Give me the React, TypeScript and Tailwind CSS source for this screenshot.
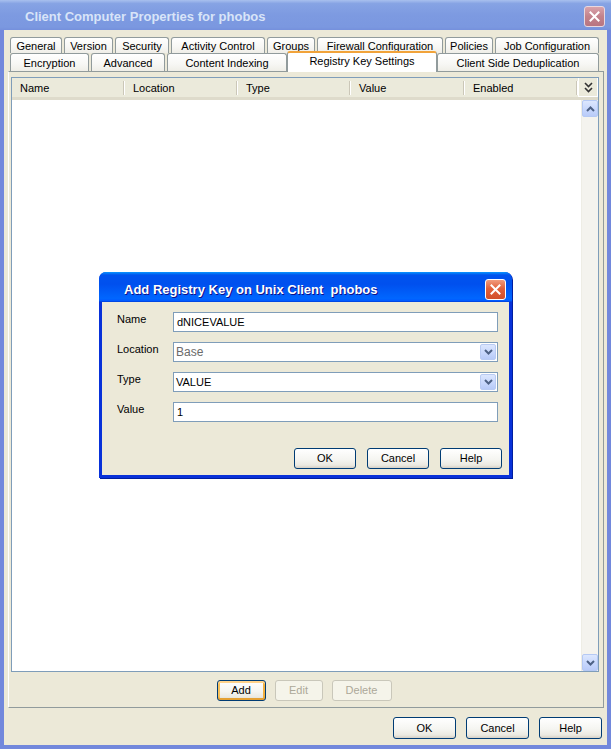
import type { ReactNode } from 'react';

const FONT = "font-['Liberation_Sans',Arial,sans-serif]";

// Classic XP push button
function XpButton({ label, className, focused, disabled }: { label: string; className: string; focused?: boolean; disabled?: boolean }) {
  if (disabled) {
    return (
      <div className={`flex items-center justify-center rounded-[3px] border border-[#c9c7ba] bg-[#f5f4ea] text-[11px] text-[#aca899] ${className}`}>
        {label}
      </div>
    );
  }
  return (
    <div
      className={`flex items-center justify-center rounded-[3px] border border-[#003c74] bg-[linear-gradient(180deg,#ffffff_0%,#f5f5f1_55%,#ebe9e1_85%,#d6d0c5_100%)] text-[11px] text-black ${
        focused ? 'shadow-[inset_0_2px_0_0_#ffd38c,inset_0_-2px_0_0_#e5a134,inset_2px_0_0_0_#f8c25c,inset_-2px_0_0_0_#f1b040]' : ''
      } ${className}`}
    >
      {label}
    </div>
  );
}

function CloseX({ size = 11 }: { size?: number }) {
  return (
    <svg width={size} height={size} viewBox="0 0 11 11">
      <path d="M1.5 1.5 L9.5 9.5 M9.5 1.5 L1.5 9.5" stroke="#ffffff" strokeWidth="2" strokeLinecap="square" />
    </svg>
  );
}

function ChevronDown({ color = '#4d6185' }: { color?: string }) {
  return (
    <svg width="9" height="6" viewBox="0 0 9 6">
      <path d="M1 1 L4.5 4.5 L8 1" fill="none" stroke={color} strokeWidth="2" />
    </svg>
  );
}

function Tab({ label, className }: { label: string; className: string }) {
  return (
    <div
      className={`flex items-center justify-center rounded-t-[3px] border border-b-0 border-[#919b9c] bg-[linear-gradient(180deg,#ffffff_0%,#f7f7f4_60%,#efeee7_100%)] text-[11px] text-black whitespace-nowrap ${className}`}
    >
      {label}
    </div>
  );
}

function HeaderCell({ label, className }: { label: string; className: string }) {
  return (
    <div className={`flex items-center h-full ${className}`}>
      <span className="flex-1 pl-[8px] pt-[1px] text-[11px] text-black">{label}</span>
      <div className="w-[1px] h-[14px] bg-[#cbc7b8]" />
      <div className="w-[1px] h-[14px] bg-white" />
    </div>
  );
}

function FieldRow({ label, children }: { label: string; children: ReactNode }) {
  return (
    <div className="flex items-start h-[20px]">
      <div className="w-[71px] pl-[15px] text-[11px] text-black leading-[14px]">{label}</div>
      <div className="flex-1 h-full">{children}</div>
    </div>
  );
}

function Combo({ value, muted }: { value: string; muted?: boolean }) {
  return (
    <div className="flex items-center h-full border border-[#7f9db9] bg-white pl-[2px] pr-[1px]">
      <span className={`flex-1 ${muted ? 'text-[12px] text-[#6b6b6b]' : 'text-[11px] text-black'}`}>{value}</span>
      <div className="flex items-center justify-center w-[16px] h-[16px] rounded-[2px] border border-[#b9cbf3] bg-[linear-gradient(180deg,#dbe6fe_0%,#c6d6fc_60%,#b7caf8_100%)]">
        <ChevronDown />
      </div>
    </div>
  );
}

function AddKeyDialog() {
  return (
    <div className="absolute left-[99px] top-[272px] w-[413px] h-[206px] flex flex-col rounded-t-[7px] bg-[#0831d9] shadow-[1px_1px_0_#001ea0]">
      {/* active title bar */}
      <div className="h-[30px] flex items-center rounded-t-[7px] bg-[linear-gradient(180deg,#0997ff_0%,#0053ee_10%,#0050ee_40%,#0066ff_88%,#005bff_95%,#003dd7_100%)] pl-[25px] pr-[6px]">
        <span className="flex-1 pt-[5px] text-[13px] font-bold text-white [text-shadow:1px_1px_0_#0f1089]">
          Add Registry Key on Unix Client&nbsp;&nbsp;phobos
        </span>
        <div className="flex items-center justify-center w-[21px] h-[21px] mt-[4px] rounded-[3px] border border-white bg-[linear-gradient(180deg,#f19c7e_0%,#e2613b_45%,#d24e2a_100%)]">
          <CloseX />
        </div>
      </div>
      {/* body */}
      <div className="flex-1 mx-[3px] mb-[3px] bg-[#ece9d8] flex flex-col pt-[10px] pr-[11px] gap-[10px]">
        <FieldRow label="Name">
          <div className="flex items-center h-full border border-[#7f9db9] bg-white pl-[3px] text-[11px] text-black">dNICEVALUE</div>
        </FieldRow>
        <FieldRow label="Location">
          <Combo value="Base" muted />
        </FieldRow>
        <FieldRow label="Type">
          <Combo value="VALUE" />
        </FieldRow>
        <FieldRow label="Value">
          <div className="flex items-center h-full border border-[#7f9db9] bg-white pl-[3px] text-[11px] text-black">1</div>
        </FieldRow>
        <div className="flex justify-end gap-[11px] mt-[16px] -mr-[4px]">
          <XpButton label="OK" className="w-[62px] h-[21px]" />
          <XpButton label="Cancel" className="w-[62px] h-[21px]" />
          <XpButton label="Help" className="w-[62px] h-[21px]" />
        </div>
      </div>
    </div>
  );
}

export default function App() {
  return (
    <div className={`relative w-[611px] h-[749px] flex flex-col bg-[#7288dc] ${FONT}`}>
      {/* inactive title bar */}
      <div className="h-[30px] flex items-center bg-[linear-gradient(180deg,#a8c0ee_0%,#86a3e4_12%,#7d9ae1_50%,#7b98e0_90%,#7590dc_100%)] pl-[25px] pr-[6px]">
        <span className="flex-1 pt-[3px] text-[13px] font-bold text-[#d8e4f8]">Client Computer Properties for phobos</span>
        <div className="flex items-center justify-center w-[21px] h-[21px] mt-[2px] rounded-[3px] border border-[#e8d8e0] bg-[linear-gradient(180deg,#d9a3ab_0%,#c3828c_50%,#b87581_100%)]">
          <CloseX />
        </div>
      </div>

      {/* window body */}
      <div className="flex-1 mx-[4px] mb-[4px] bg-[#ece9d8] flex flex-col pt-[7px]">
        {/* tab strip */}
        <div className="flex flex-col pl-[6px] pr-[8px]">
          <div className="flex h-[16px] gap-[2px]">
            <Tab label="General" className="w-[52px] pt-[2px]" />
            <Tab label="Version" className="w-[49px] pt-[2px]" />
            <Tab label="Security" className="w-[54px] pt-[2px]" />
            <Tab label="Activity Control" className="w-[94px] pt-[2px]" />
            <Tab label="Groups" className="w-[48px] pt-[2px]" />
            <Tab label="Firewall Configuration" className="w-[126px] pt-[2px]" />
            <Tab label="Policies" className="w-[48px] pt-[2px]" />
            <Tab label="Job Configuration" className="w-[104px] pt-[2px]" />
          </div>
          <div className="flex items-end h-[18px] gap-[2px]">
            <Tab label="Encryption" className="w-[79px] h-[18px] pt-[1px]" />
            <Tab label="Advanced" className="w-[74px] h-[18px] pt-[1px]" />
            <Tab label="Content Indexing" className="w-[120px] h-[18px] pt-[1px]" />
            <div className="relative z-10 w-[150px] h-[21px] -mx-[2px] -mb-[1px] flex items-center justify-center rounded-t-[3px] border border-b-0 border-[#919b9c] border-t-[2px] border-t-[#f1a33a] bg-white text-[11px] text-black pb-[3px]">
              Registry Key Settings
            </div>
            <Tab label="Client Side Deduplication" className="w-[162px] h-[18px] pt-[1px]" />
          </div>
        </div>

        {/* tab panel */}
        <div className="h-[637px] ml-[4px] mr-[3px] border border-[#919b9c] border-l-white flex flex-col pt-[5px] pl-[2px] pr-[4px]">
          {/* table */}
          <div className="flex-1 border border-[#7f9db9] bg-white flex flex-col">
            <div className="flex h-[19px] bg-[#ebeadb] border-b-[3px] border-[#dedbcb] box-content">
              <HeaderCell label="Name" className="w-[113px]" />
              <HeaderCell label="Location" className="w-[113px]" />
              <HeaderCell label="Type" className="w-[113px]" />
              <HeaderCell label="Value" className="w-[114px]" />
              <HeaderCell label="Enabled" className="w-[113px]" />
              <div className="flex-1 flex items-center justify-center border-l border-white border-r border-b border-[#aca899]">
                <svg width="9" height="11" viewBox="0 0 9 11">
                  <path d="M1 1 L4.5 4.5 L8 1 M1 6 L4.5 9.5 L8 6" fill="none" stroke="#333333" strokeWidth="1.6" />
                </svg>
              </div>
            </div>
            <div className="flex-1 flex">
              <div className="flex-1" />
              {/* vertical scrollbar */}
              <div className="w-[17px] flex flex-col bg-[#f4f3ee] border-l border-[#eeede5]">
                <div className="h-[17px] flex items-center justify-center rounded-[2px] border border-[#b5c9f4] bg-[linear-gradient(180deg,#dce7fe_0%,#c6d6fc_60%,#b9cbf8_100%)]">
                  <svg width="9" height="6" viewBox="0 0 9 6">
                    <path d="M1 5 L4.5 1.5 L8 5" fill="none" stroke="#4d6185" strokeWidth="2" />
                  </svg>
                </div>
                <div className="flex-1" />
                <div className="h-[17px] flex items-center justify-center rounded-[2px] border border-[#b5c9f4] bg-[linear-gradient(180deg,#dce7fe_0%,#c6d6fc_60%,#b9cbf8_100%)]">
                  <ChevronDown />
                </div>
              </div>
            </div>
          </div>
          <div className="flex justify-center gap-[9px] pt-[8px] pb-[6px] pr-[2px]">
            <XpButton label="Add" className="w-[49px] h-[21px]" focused />
            <XpButton label="Edit" disabled className="w-[48px] h-[21px]" />
            <XpButton label="Delete" disabled className="w-[60px] h-[21px]" />
          </div>
        </div>

        {/* dialog buttons */}
        <div className="flex justify-end gap-[10px] pt-[9px] pr-[5px]">
          <XpButton label="OK" className="w-[63px] h-[22px]" />
          <XpButton label="Cancel" className="w-[63px] h-[22px]" />
          <XpButton label="Help" className="w-[63px] h-[22px]" />
        </div>
      </div>

      <AddKeyDialog />
    </div>
  );
}
